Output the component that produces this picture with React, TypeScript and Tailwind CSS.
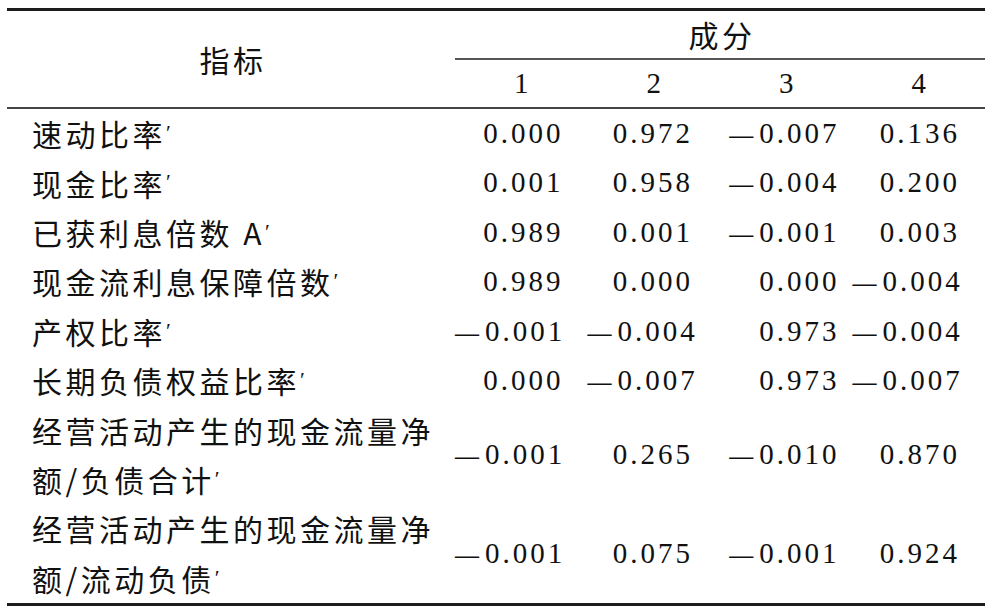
import React from "react";

const cjk = { fontFamily: '"Noto Sans CJK SC", "Noto Sans CJK JP", sans-serif' };
const serif = { fontFamily: '"Liberation Serif", "Noto Sans CJK SC", serif' };

type Row = { label: string[]; values: string[] };

const rows: Row[] = [
  { label: ["速动比率"], values: ["0.000", "0.972", "-0.007", "0.136"] },
  { label: ["现金比率"], values: ["0.001", "0.958", "-0.004", "0.200"] },
  { label: ["已获利息倍数 A"], values: ["0.989", "0.001", "-0.001", "0.003"] },
  { label: ["现金流利息保障倍数"], values: ["0.989", "0.000", "0.000", "-0.004"] },
  { label: ["产权比率"], values: ["-0.001", "-0.004", "0.973", "-0.004"] },
  { label: ["长期负债权益比率"], values: ["0.000", "-0.007", "0.973", "-0.007"] },
  { label: ["经营活动产生的现金流量净", "额/负债合计"], values: ["-0.001", "0.265", "-0.010", "0.870"] },
  { label: ["经营活动产生的现金流量净", "额/流动负债"], values: ["-0.001", "0.075", "-0.001", "0.924"] },
];

function Num({ v }: { v: string }) {
  const neg = v.startsWith("-");
  const body = neg ? v.slice(1) : v;
  return (
    <span className="whitespace-nowrap text-[29px] tracking-[3px] text-[#111]" style={serif}>
      {neg && <span className="text-[24px] tracking-[6px] font-bold">—</span>}
      {body}
    </span>
  );
}

const colPad = ["pr-[24px]", "pr-[27px]", "pr-[13px]", "pr-[25px]"];

export default function App() {
  return (
    <div className="w-[992px] h-[608px] bg-white pt-[8px] px-[7px]">
      <div className="w-[978px] border-t-[3px] border-b-[3px] border-[#1c1c1c]">
        {/* header */}
        <div className="flex border-b-2 border-[#444]">
          <div className="w-[448px] flex items-center justify-center">
            <span className="text-[30px] tracking-[3.5px] text-[#111] pl-[4px]" style={cjk}>
              指标
            </span>
          </div>
          <div className="flex-1 flex flex-col">
            <div className="h-[49px] flex items-center justify-center border-b-2 border-[#555]">
              <span className="text-[30px] tracking-[3.5px] text-[#111] pl-[4px]" style={cjk}>
                成分
              </span>
            </div>
            <div className="h-[47px] grid grid-cols-4 items-center">
              {["1", "2", "3", "4"].map((n) => (
                <div key={n} className="text-center text-[29px] text-[#111]" style={serif}>
                  {n}
                </div>
              ))}
            </div>
          </div>
        </div>
        {/* body */}
        <div className="flex flex-col">
          {rows.map((r, i) => (
            <div key={i} className="flex items-center">
              <div className="w-[448px] pl-[25px]">
                {r.label.map((l, j) => (
                  <div
                    key={j}
                    className="h-[49.4px] flex items-center text-[30px] tracking-[3.5px] text-[#111] whitespace-nowrap"
                    style={cjk}
                  >
                    {l}
                    {j === r.label.length - 1 && (
                      <span className="text-[22px] self-start mt-[7px]" style={serif}>
                        ′
                      </span>
                    )}
                  </div>
                ))}
              </div>
              <div className="flex-1 grid grid-cols-4 items-center">
                {r.values.map((v, k) => (
                  <div key={k} className={`text-right ${colPad[k]}`}>
                    <Num v={v} />
                  </div>
                ))}
              </div>
            </div>
          ))}
        </div>
      </div>
    </div>
  );
}
